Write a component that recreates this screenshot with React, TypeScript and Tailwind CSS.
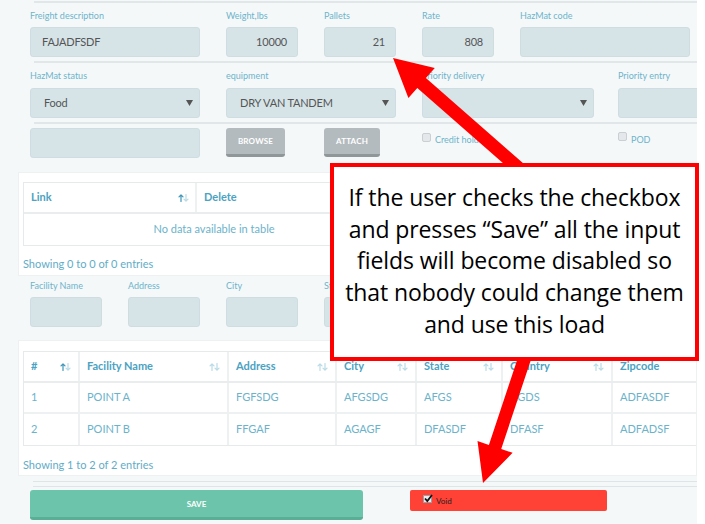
import React from "react";

const ui: React.CSSProperties = { fontFamily: "Lato, 'Open Sans', sans-serif" };

function arrowPts(tail: [number, number], tip: [number, number], sw: number, hw: number, hl: number) {
  const dx = tip[0] - tail[0];
  const dy = tip[1] - tail[1];
  const len = Math.hypot(dx, dy);
  const ux = dx / len;
  const uy = dy / len;
  const px = -uy;
  const py = ux;
  const bx = tip[0] - ux * hl;
  const by = tip[1] - uy * hl;
  const pts: [number, number][] = [
    [tail[0] + px * sw, tail[1] + py * sw],
    [bx + px * sw, by + py * sw],
    [bx + px * hw, by + py * hw],
    tip,
    [bx - px * hw, by - py * hw],
    [bx - px * sw, by - py * sw],
    [tail[0] - px * sw, tail[1] - py * sw],
  ];
  return pts.map((p) => p.map((v) => v.toFixed(1)).join(",")).join(" ");
}

function SortIcon({ active = false }: { active?: boolean }) {
  return (
    <svg width="11" height="8" viewBox="0 0 11 8" className="shrink-0">
      <g fill="none" strokeWidth="1.2" strokeLinecap="round" strokeLinejoin="round">
        <path d="M3 7.5V0.8M1 2.8L3 0.8L5 2.8" stroke={active ? "#3f95b8" : "#b9dbe6"} />
        <path d="M8 0.5V7.2M6 5.2L8 7.2L10 5.2" stroke="#b9dbe6" />
      </g>
    </svg>
  );
}

function Label({ children }: { children: React.ReactNode }) {
  return <div className="h-[12px] text-[9px] leading-[12px] text-[#6db4cb] whitespace-nowrap">{children}</div>;
}

function Input({ value = "", right = false, className = "" }: { value?: string; right?: boolean; className?: string }) {
  return (
    <div
      className={`h-[30px] rounded-[3px] border border-[#cfdde2] bg-[#d6e4e8] flex items-center text-[11px] tracking-[-0.2px] text-[#555] ${
        right ? "justify-end pr-[10px]" : "pl-[11px]"
      } ${className}`}
    >
      {value}
    </div>
  );
}

function Select({ value = "" }: { value?: string }) {
  return (
    <div className="h-[30px] rounded-[3px] border border-[#cfdde2] bg-[#d6e4e8] flex items-center justify-between pl-[13px] pr-[6px] text-[11px] tracking-[-0.2px] text-[#555]">
      <span>{value}</span>
      <svg width="7" height="6" viewBox="0 0 7 6">
        <path d="M0 0H7L3.5 6Z" fill="#555" />
      </svg>
    </div>
  );
}

function Checkbox() {
  return <span className="inline-block w-[9px] h-[9px] rounded-[2px] border border-[#c9cfd2] bg-[#e4e8ea]" />;
}

function GrayBtn({ label, w }: { label: string; w: string }) {
  return (
    <div
      className={`${w} h-[29px] rounded-[3px] bg-[#b4bbbe] border-b-[3px] border-[#8f9799] flex items-center justify-center text-[8px] font-bold tracking-[0.2px] text-white`}
    >
      {label}
    </div>
  );
}

function Divider() {
  return <div className="ml-[34px] h-[2px] bg-[#e1e7e9]" />;
}

export default function App() {
  const cols2 = [
    { t: "#", w: "w-[56px]", s: true, active: true },
    { t: "Facility Name", w: "w-[149px]", s: true },
    { t: "Address", w: "w-[108px]", s: true },
    { t: "City", w: "w-[80px]", s: true },
    { t: "State", w: "w-[86px]", s: true },
    { t: "Country", w: "w-[110px]", s: true },
    { t: "Zipcode", w: "w-[110px]", s: false },
  ];
  const rows2 = [
    ["1", "POINT A", "FGFSDG", "AFGSDG", "AFGS", "AGDS", "ADFASDF"],
    ["2", "POINT B", "FFGAF", "AGAGF", "DFASDF", "DFASF", "ADFADSF"],
  ];
  return (
    <div className="relative w-[705px] h-[524px] overflow-hidden bg-white" style={ui}>
      <div className="w-[697px] h-full bg-[#f5f8f9] overflow-hidden">
        <div className="h-[1px]" />
        <Divider />
        {/* Row 1 */}
        <div className="grid grid-cols-[repeat(7,72px)] gap-x-[26px] pl-[30px] pt-[7px] pb-[4px]">
          <div className="col-span-2 flex flex-col gap-[5px]">
            <Label>Freight description</Label>
            <Input value="FAJADFSDF" />
          </div>
          <div className="flex flex-col gap-[5px]">
            <Label>Weight,lbs</Label>
            <Input value="10000" right />
          </div>
          <div className="flex flex-col gap-[5px]">
            <Label>Pallets</Label>
            <Input value="21" right />
          </div>
          <div className="flex flex-col gap-[5px]">
            <Label>Rate</Label>
            <Input value="808" right />
          </div>
          <div className="col-span-2 flex flex-col gap-[5px]">
            <Label>HazMat code</Label>
            <Input />
          </div>
        </div>
        <Divider />
        {/* Row 2 */}
        <div className="grid grid-cols-[repeat(7,72px)] gap-x-[26px] pl-[30px] pt-[7px] pb-[4px]">
          <div className="col-span-2 flex flex-col gap-[6px]">
            <Label>HazMat status</Label>
            <Select value="Food" />
          </div>
          <div className="col-span-2 flex flex-col gap-[6px]">
            <Label>equipment</Label>
            <Select value="DRY VAN TANDEM" />
          </div>
          <div className="col-span-2 flex flex-col gap-[6px]">
            <Label>Priority delivery</Label>
            <div className="w-[172px]">
              <Select />
            </div>
          </div>
          <div className="flex flex-col gap-[6px]">
            <Label>Priority entry</Label>
            <Input className="w-[110px]" />
          </div>
        </div>
        <Divider />
        {/* Row 3 */}
        <div className="grid grid-cols-[repeat(7,72px)] gap-x-[26px] pl-[30px] pt-[4px]">
          <div className="col-span-2">
            <Input />
          </div>
          <div>
            <GrayBtn label="BROWSE" w="w-[59px]" />
          </div>
          <div>
            <GrayBtn label="ATTACH" w="w-[56px]" />
          </div>
          <div className="col-span-2 flex items-start gap-[4px] pt-[5px]">
            <Checkbox />
            <span className="text-[9px] leading-[12px] text-[#6db4cb] mt-[1px]">Credit hold</span>
          </div>
          <div className="flex items-start gap-[4px] pt-[4px]">
            <Checkbox />
            <span className="text-[9px] leading-[12px] text-[#6db4cb] mt-[2px]">POD</span>
          </div>
        </div>

        {/* Panel 1 */}
        <div className="mt-[14px] ml-[18px] h-[104px] bg-white border border-[#edf1f2] pt-[9px] pl-[4px]">
          <div className="w-[382px] border border-[#e6eaeb]">
            <div className="flex h-[31px] border-b-2 border-[#e9edee]">
              <div className="w-[173px] flex items-center justify-between pl-[7px] pr-[6px] border-r-2 border-[#eef1f2]">
                <span className="text-[11px] font-bold text-[#4ba2c2]">Link</span>
                <SortIcon active />
              </div>
              <div className="flex-1 flex items-center pl-[7px]">
                <span className="text-[11px] font-bold text-[#4ba2c2]">Delete</span>
              </div>
            </div>
            <div className="h-[31px] flex items-center justify-center text-[11px] text-[#6bb3cb]">
              No data available in table
            </div>
          </div>
          <div className="mt-[12px] text-[11px] leading-[12px] text-[#62acc7]">Showing 0 to 0 of 0 entries</div>
        </div>

        {/* Facility fields */}
        <div className="grid grid-cols-[repeat(7,72px)] gap-x-[26px] pl-[30px] pt-[4px]">
          {["Facility Name", "Address", "City", "State"].map((l) => (
            <div key={l} className="flex flex-col gap-[5px]">
              <Label>{l}</Label>
              <Input />
            </div>
          ))}
        </div>

        {/* Panel 2 */}
        <div className="mt-[13px] ml-[18px] h-[136px] bg-white border border-[#edf1f2] pt-[10px] pl-[4px]">
          <div className="border-y border-l border-[#e6eaeb]">
            <div className="flex h-[31px] border-b-2 border-[#e9edee]">
              {cols2.map((c, i) => (
                <div
                  key={c.t}
                  className={`${c.w} shrink-0 flex items-center justify-between pl-[7px] pr-[7px] ${
                    i < cols2.length - 1 ? "border-r-2 border-[#eef1f2]" : ""
                  }`}
                >
                  <span className="text-[11px] font-bold text-[#4ba2c2]">{c.t}</span>
                  {c.s && <SortIcon active={c.active} />}
                </div>
              ))}
            </div>
            {rows2.map((r, ri) => (
              <div key={ri} className={`flex h-[31px] ${ri === 0 ? "border-b-2 border-[#eef1f2]" : ""}`}>
                {r.map((v, i) => (
                  <div
                    key={i}
                    className={`${cols2[i].w} shrink-0 flex items-center pl-[7px] text-[11px] text-[#6bb3cb] ${
                      i < r.length - 1 ? "border-r-2 border-[#eef1f2]" : ""
                    }`}
                  >
                    {v}
                  </div>
                ))}
              </div>
            ))}
          </div>
          <div className="mt-[13px] text-[11px] leading-[12px] text-[#62acc7]">Showing 1 to 2 of 2 entries</div>
        </div>

        <div className="mt-[5px] ml-[33px] h-[1px] bg-[#dfe5e7]" />
        <div className="mt-[4px] ml-[33px] h-[1px] bg-[#dfe5e7]" />

        <div className="mt-[3px] flex items-start">
          <div className="ml-[30px] w-[333px] h-[30px] rounded-[3px] bg-[#6cc5ab] border-b-[3px] border-[#5aae95] flex items-center justify-center text-[8px] font-bold text-white">
            SAVE
          </div>
          <div className="ml-[47px] w-[197px] h-[21px] rounded-[2px] bg-[#ff4136] flex items-start pl-[13px] pt-[5px] gap-[4px]">
            <span className="relative inline-block w-[9px] h-[8px] border border-[#9aa0a3] bg-[#e9ecee]">
              <svg width="9" height="9" viewBox="0 0 9 9" className="absolute left-[0px] top-[-2px]">
                <path d="M1 4.5L3.3 7L8 1" fill="none" stroke="#111" strokeWidth="1.8" />
              </svg>
            </span>
            <span className="text-[8px] leading-[10px] text-[#222] mt-[1px]">Void</span>
          </div>
        </div>
      </div>

      {/* Annotation arrows */}
      <svg className="absolute left-0 top-0 pointer-events-none" width="705" height="524" viewBox="0 0 705 524">
        <polygon points={arrowPts([530, 178], [393, 58], 6.5, 20, 38)} fill="#ff0000" />
        <polygon points={arrowPts([529, 345], [483, 483], 6.5, 18.5, 38)} fill="#ff0000" />
      </svg>

      {/* Callout */}
      <div
        className="absolute left-[330px] top-[163px] w-[369px] h-[198px] border-4 border-[#ff0000] bg-white pt-[15px] text-center text-[23px] leading-[31.7px] tracking-[-0.1px] text-black whitespace-nowrap"
        style={{ fontFamily: "'Open Sans', sans-serif" }}
      >
        If the user checks the checkbox
        <br />
        and presses “Save” all the input
        <br />
        fields will become disabled so
        <br />
        that nobody could change them
        <br />
        and use this load
      </div>
    </div>
  );
}
